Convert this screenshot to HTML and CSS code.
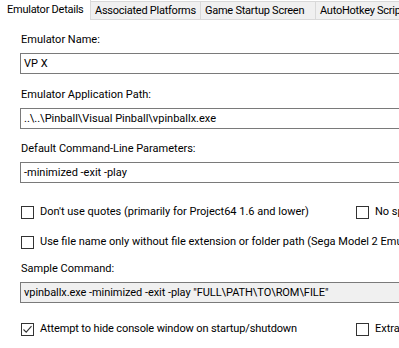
FILE: index.html
```html
<!DOCTYPE html>
<html>
<head>
<meta charset="utf-8">
<link rel="stylesheet" href="styles.css">
</head>
<body>
<div class="window">
  <div class="tabs">
    <div class="tab tab-active">Emulator Details</div>
    <div class="tab">Associated Platforms</div>
    <div class="tab">Game Startup Screen</div>
    <div class="tab">AutoHotkey Scripts</div>
  </div>
  <div class="panel">
    <div class="field">
      <div class="field-label">Emulator Name:</div>
      <div class="textbox">VP X</div>
    </div>
    <div class="field">
      <div class="field-label">Emulator Application Path:</div>
      <div class="textbox">..\..\Pinball\Visual Pinball\vpinballx.exe</div>
    </div>
    <div class="field">
      <div class="field-label">Default Command-Line Parameters:</div>
      <div class="textbox">-minimized -exit -play</div>
    </div>
    <div class="check-row row-1">
      <label class="check"><span class="box"></span><span>Don't use quotes (primarily for Project64 1.6 and lower)</span></label>
      <label class="check"><span class="box"></span><span>No space before ROM</span></label>
    </div>
    <div class="check-row row-2">
      <label class="check"><span class="box"></span><span>Use file name only without file extension or folder path (Sega Model 2 Emulator)</span></label>
    </div>
    <div class="field field-sample">
      <div class="field-label">Sample Command:</div>
      <div class="textbox textbox-readonly">vpinballx.exe -minimized -exit -play "FULL\PATH\TO\ROM\FILE"</div>
    </div>
    <div class="check-row row-3">
      <label class="check"><span class="box box-checked"><svg viewBox="0 0 13 13" width="13" height="13"><path d="M2.5 6.5 L5.2 9.2 L10.5 3.2" fill="none" stroke="#333" stroke-width="1.1"/></svg></span><span class="tight">Attempt to hide console window on startup/shutdown</span></label>
      <label class="check"><span class="box"></span><span>Extra Hotkeys</span></label>
    </div>
  </div>
</div>
</body>
</html>
```
FILE: styles.css
```css
html, body {
  margin: 0;
  padding: 0;
  background: #ffffff;
  overflow: hidden;
}
.window {
  width: 399px;
  height: 348px;
  overflow: hidden;
  font-family: Roboto, "Noto Sans", sans-serif;
  font-size: 11px;
  color: #000;
  background: #fff;
}
.tabs {
  display: flex;
  height: 20px;
  white-space: nowrap;
  letter-spacing: -0.25px;
}
.tab {
  box-sizing: border-box;
  height: 19px;
  margin-top: 1px;
  padding: 0 4px;
  line-height: 17px;
  background: #f0f0f0;
  border: 1px solid #d9d9d9;
  border-left: none;
  flex: none;
  overflow: hidden;
}
.tab-active {
  background: #fff;
  border: none;
  margin-top: 0;
  height: 20px;
  line-height: 19px;
  padding: 0 0 0 7px;
  width: 91px;
  border-right: 1px solid #d9d9d9;
}
.tab:nth-child(2) { width: 110px; }
.tab:nth-child(3) { width: 115px; }
.tab:nth-child(4) { width: 100px; }
.panel {
  width: 460px;
  padding: 13px 0 0 20px;
}
.field-label {
  height: 14px;
  line-height: 14px;
  padding-left: 1px;
  margin-bottom: 6px;
  white-space: nowrap;
}
.textbox {
  box-sizing: border-box;
  height: 21px;
  border: 1px solid #7a7a7a;
  padding: 0 3px;
  line-height: 19px;
  white-space: nowrap;
  background: #fff;
}
.textbox-readonly {
  background: #f0f0f0;
  letter-spacing: -0.06px;
}
.field + .field {
  margin-top: 14px;
}
.field:nth-child(3) {
  margin-top: 13px;
}
.check-row {
  display: grid;
  grid-template-columns: 335px auto;
  height: 14px;
  margin-left: 1px;
  white-space: nowrap;
}
.row-1 { margin-top: 22px; }
.row-2 { margin-top: 16px; }
.field-sample { margin-top: 13px; }
.row-3 { margin-top: 19px; }
.check {
  display: flex;
  align-items: center;
  gap: 6px;
  line-height: 14px;
}
.tight {
  letter-spacing: -0.12px;
}
.box {
  box-sizing: border-box;
  width: 13px;
  height: 13px;
  border: 1px solid #333;
  background: #fff;
  flex: none;
  position: relative;
}
.box svg {
  position: absolute;
  left: -1px;
  top: -1px;
}
```
